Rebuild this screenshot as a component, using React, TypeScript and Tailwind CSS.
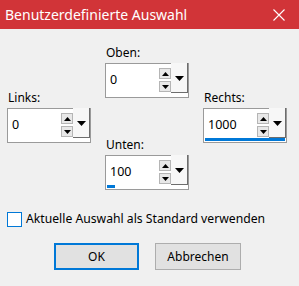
import { ReactNode } from "react"

const font = { fontFamily: '"Noto Sans", "Liberation Sans", sans-serif' }

export default function App() {
    return (
        <div className="w-[299px] h-[286px] bg-[#f0f0f0] overflow-hidden text-[12px] text-black" style={font}>
            <div className="h-[29px] bg-[#d13438] flex items-center justify-between pl-[5px] pr-[14px]">
                <span className="text-white text-[14px] leading-none">Benutzerdefinierte Auswahl</span>
                <svg width="12" height="12" viewBox="0 0 12 12">
                    <path d="M0.5 0.5 L11.5 11.5 M11.5 0.5 L0.5 11.5" stroke="#fff" strokeWidth="1.1" fill="none" />
                </svg>
            </div>

            <div className="flex px-[7px] gap-[14px]">
                <div className="w-[84px] pt-[61px]">
                    <Field label="Links:" value="0" bar={0} />
                </div>
                <div className="w-[84px] pt-[16px] flex flex-col">
                    <Field label="Oben:" value="0" bar={0} />
                    <div className="h-[39px]" />
                    <Field label="Unten:" value="100" bar={10} />
                </div>
                <div className="w-[84px] pt-[61px]">
                    <Field label="Rechts:" value="1000" bar={100} />
                </div>
            </div>

            <div className="flex items-center gap-[4px] pl-[7px] mt-[21px]">
                <div className="w-[15px] h-[15px] border border-[#0078d7] bg-white" />
                <span className="leading-[16px] text-[12.2px]">Aktuelle Auswahl als Standard verwenden</span>
            </div>

            <div className="flex justify-center gap-[16px] mt-[16px] pr-[4px]">
                <Btn primary>OK</Btn>
                <Btn>Abbrechen</Btn>
            </div>
        </div>
    )
}

function Field({ label, value, bar }: { label: string; value: string; bar: number }) {
    return (
        <div className="flex flex-col">
            <div className="h-[16px] leading-[16px] pl-[1px]">{label}</div>
            <div className="mt-[2px] h-[35px] border border-[#9a9a9a] bg-white flex relative">
                <div className="flex-1 flex items-center pl-[4px] pb-[1px] text-[12.5px]">{value}</div>
                <div className="flex flex-col gap-[2px] pt-[4px] w-[12px]">
                    <SpinBtn up />
                    <SpinBtn />
                </div>
                <div className="w-[17px] h-[30px] -mt-px border-r border-b border-[#6d6d6d] bg-[#f7f7f7] flex items-center justify-center pt-[2px]">
                    <svg width="9" height="5" viewBox="0 0 9 5"><path d="M0 0 H9 L4.5 5 Z" fill="#000" /></svg>
                </div>
                {bar > 0 && (
                    <div className="absolute left-[1px] bottom-[1px] h-[3px] bg-[#0078d7]" style={{ width: `${bar * 0.97}%` }} />
                )}
            </div>
        </div>
    )
}

function SpinBtn({ up }: { up?: boolean }) {
    return (
        <div className="h-[11px] w-[12px] border border-[#b5b5b5] bg-[#e8e8e8] flex items-center justify-center">
            <svg width="7" height="4" viewBox="0 0 7 4">
                <path d={up ? "M0 4 H7 L3.5 0 Z" : "M0 0 H7 L3.5 4 Z"} fill="#000" />
            </svg>
        </div>
    )
}

function Btn({ children, primary }: { children: ReactNode; primary?: boolean }) {
    return (
        <div
            className={
                primary
                    ? "w-[85px] h-[27px] border-2 border-[#0078d7] bg-[#e1e1e1] flex items-center justify-center"
                    : "w-[86px] h-[27px] border border-[#adadad] bg-[#e1e1e1] flex items-center justify-center"
            }
        >
            {children}
        </div>
    )
}
